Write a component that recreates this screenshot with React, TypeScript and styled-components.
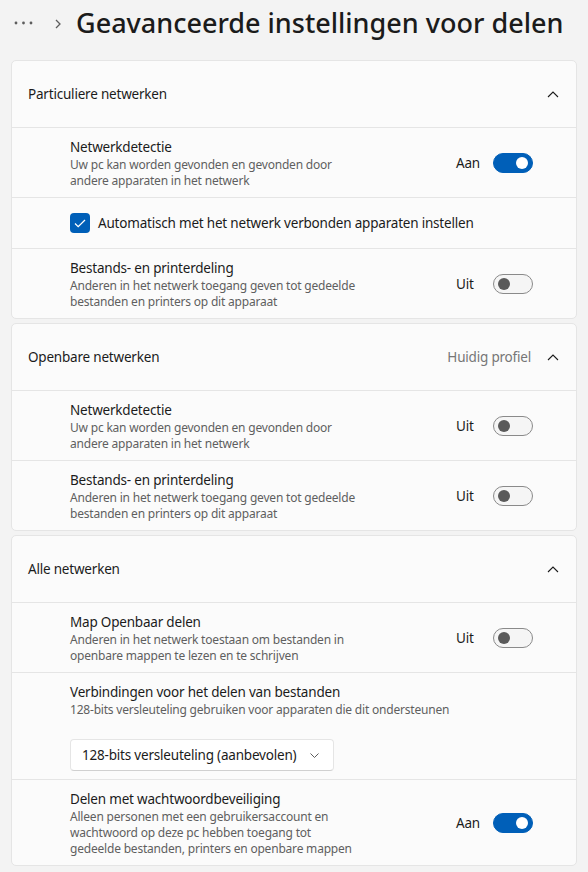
import React from "react";
import styled, { createGlobalStyle } from "styled-components";

const Global = createGlobalStyle`
  html, body { margin: 0; padding: 0; background: #f3f3f3; }
  body { font-family: "Noto Sans", "Open Sans", "Liberation Sans", sans-serif; color: #1b1b1b; }
  * { box-sizing: border-box; }
`;

const Page = styled.div`
  width: 588px;
  padding: 0 11px 8px 11px;
`;

const Header = styled.div`
  height: 60px;
  display: flex;
  align-items: center;
  padding-bottom: 15px;
`;

const Dots = styled.div`
  width: 22px;
  display: flex;
  align-items: center;
  margin-left: 3px;
  color: #5d5d5d;
`;

const Crumb = styled.div`
  margin-left: 19px;
  margin-right: 15px;
  display: flex;
  align-items: center;
  margin-top: 2px;
  color: #5d5d5d;
`;

const Title = styled.h1`
  margin: 0;
  font-size: 27px;
  font-weight: 500;
  letter-spacing: 0;
  color: #1b1b1b;
  white-space: nowrap;
`;

const Card = styled.section`
  background: #fbfbfb;
  border: 1px solid #e5e5e5;
  border-radius: 5px;
  margin-bottom: 4px;
`;

const CardHead = styled.div`
  height: 66px;
  display: flex;
  align-items: center;
  padding: 0 17px 0 16px;
  font-size: 13.5px;
  letter-spacing: -0.2px;
`;

const HeadTitle = styled.div`
  flex: 1;
`;

const HeadMeta = styled.div`
  color: #767676;
  margin-right: 16px;
`;

const Row = styled.div<{ $h: number }>`
  min-height: ${(p) => p.$h}px;
  border-top: 1px solid #e5e5e5;
  display: flex;
  align-items: center;
  padding: 9px 43px 8px 58px;
`;

const Texts = styled.div`
  flex: 1;
  display: flex;
  flex-direction: column;
`;

const RowTitle = styled.div`
  font-size: 13.5px;
  letter-spacing: -0.2px;
  line-height: 20px;
  color: #1b1b1b;
`;

const RowDesc = styled.div`
  font-size: 12px;
  letter-spacing: -0.2px;
  line-height: 16px;
  color: #5f5f5f;
  max-width: 300px;
`;

const WideDesc = styled(RowDesc)`
  max-width: none;
`;

const StateLabel = styled.div`
  width: 37px;
  font-size: 13.5px;
  letter-spacing: -0.2px;
  color: #1b1b1b;
`;

const Track = styled.div<{ $on: boolean }>`
  width: 40px;
  height: 20px;
  border-radius: 10px;
  display: flex;
  align-items: center;
  justify-content: ${(p) => (p.$on ? "flex-end" : "flex-start")};
  padding: 0 4px;
  background: ${(p) => (p.$on ? "#005fb8" : "#f5f5f5")};
  border: 1px solid ${(p) => (p.$on ? "#005fb8" : "#8a8a8a")};
`;

const Knob = styled.div<{ $on: boolean }>`
  width: 12px;
  height: 12px;
  border-radius: 50%;
  background: ${(p) => (p.$on ? "#ffffff" : "#5a5a5a")};
`;

const CheckRow = styled.div`
  height: 51px;
  border-top: 1px solid #e5e5e5;
  display: flex;
  align-items: center;
  padding-left: 58px;
  gap: 8px;
  font-size: 13.5px;
  letter-spacing: -0.2px;
`;

const CheckBox = styled.div`
  width: 20px;
  height: 20px;
  border-radius: 4px;
  background: #005fb8;
  display: flex;
  align-items: center;
  justify-content: center;
`;

const Dropdown = styled.div`
  margin-top: 21px;
  width: 264px;
  height: 32px;
  border: 1px solid #e5e5e5;
  border-bottom-color: #d0d0d0;
  border-radius: 4px;
  background: #ffffff;
  display: flex;
  align-items: center;
  padding: 0 14px 0 11px;
  font-size: 13.5px;
  letter-spacing: -0.2px;
  justify-content: space-between;
`;

const ChevronUp = () => (
  <svg width="12" height="7" viewBox="0 0 12 7">
    <path d="M1 6 L6 1 L11 6" fill="none" stroke="#1b1b1b" strokeWidth="1.1" />
  </svg>
);

const Toggle = ({ on }: { on: boolean }) => (
  <>
    <StateLabel>{on ? "Aan" : "Uit"}</StateLabel>
    <Track $on={on}>
      <Knob $on={on} />
    </Track>
  </>
);

const SettingRow = ({
  title,
  desc,
  on,
}: {
  title: string;
  desc: string[];
  on: boolean;
}) => (
  <Row $h={70}>
    <Texts>
      <RowTitle>{title}</RowTitle>
      {desc.map((d) => (
        <RowDesc key={d}>{d}</RowDesc>
      ))}
    </Texts>
    <Toggle on={on} />
  </Row>
);

export default function App() {
  return (
    <Page>
      <Global />
      <Header>
        <Dots>
          <svg width="20" height="4" viewBox="0 0 20 4">
            <circle cx="2" cy="2" r="1.4" fill="#5d5d5d" />
            <circle cx="9.5" cy="2" r="1.4" fill="#5d5d5d" />
            <circle cx="17" cy="2" r="1.4" fill="#5d5d5d" />
          </svg>
        </Dots>
        <Crumb>
          <svg width="6" height="10" viewBox="0 0 6 10">
            <path d="M1 1 L5 5 L1 9" fill="none" stroke="#5d5d5d" strokeWidth="1.3" />
          </svg>
        </Crumb>
        <Title>Geavanceerde instellingen voor delen</Title>
      </Header>

      <Card>
        <CardHead>
          <HeadTitle>Particuliere netwerken</HeadTitle>
          <ChevronUp />
        </CardHead>
        <SettingRow
          title="Netwerkdetectie"
          desc={["Uw pc kan worden gevonden en gevonden door", "andere apparaten in het netwerk"]}
          on={true}
        />
        <CheckRow>
          <CheckBox>
            <svg width="12" height="9" viewBox="0 0 12 9">
              <path d="M1 4.5 L4.2 7.6 L11 1" fill="none" stroke="#ffffff" strokeWidth="1.3" />
            </svg>
          </CheckBox>
          Automatisch met het netwerk verbonden apparaten instellen
        </CheckRow>
        <SettingRow
          title="Bestands- en printerdeling"
          desc={["Anderen in het netwerk toegang geven tot gedeelde", "bestanden en printers op dit apparaat"]}
          on={false}
        />
      </Card>

      <Card>
        <CardHead>
          <HeadTitle>Openbare netwerken</HeadTitle>
          <HeadMeta>Huidig profiel</HeadMeta>
          <ChevronUp />
        </CardHead>
        <SettingRow
          title="Netwerkdetectie"
          desc={["Uw pc kan worden gevonden en gevonden door", "andere apparaten in het netwerk"]}
          on={false}
        />
        <SettingRow
          title="Bestands- en printerdeling"
          desc={["Anderen in het netwerk toegang geven tot gedeelde", "bestanden en printers op dit apparaat"]}
          on={false}
        />
      </Card>

      <Card>
        <CardHead>
          <HeadTitle>Alle netwerken</HeadTitle>
          <ChevronUp />
        </CardHead>
        <SettingRow
          title="Map Openbaar delen"
          desc={["Anderen in het netwerk toestaan om bestanden in", "openbare mappen te lezen en te schrijven"]}
          on={false}
        />
        <Row $h={106}>
          <Texts>
            <RowTitle>Verbindingen voor het delen van bestanden</RowTitle>
            <WideDesc>128-bits versleuteling gebruiken voor apparaten die dit ondersteunen</WideDesc>
            <Dropdown>
              <span>128-bits versleuteling (aanbevolen)</span>
              <svg width="9" height="5" viewBox="0 0 9 5">
                <path d="M0.5 0.5 L4.5 4.5 L8.5 0.5" fill="none" stroke="#5d5d5d" strokeWidth="1" />
              </svg>
            </Dropdown>
          </Texts>
        </Row>
        <SettingRow
          title="Delen met wachtwoordbeveiliging"
          desc={[
            "Alleen personen met een gebruikersaccount en",
            "wachtwoord op deze pc hebben toegang tot",
            "gedeelde bestanden, printers en openbare mappen",
          ]}
          on={true}
        />
      </Card>
    </Page>
  );
}
